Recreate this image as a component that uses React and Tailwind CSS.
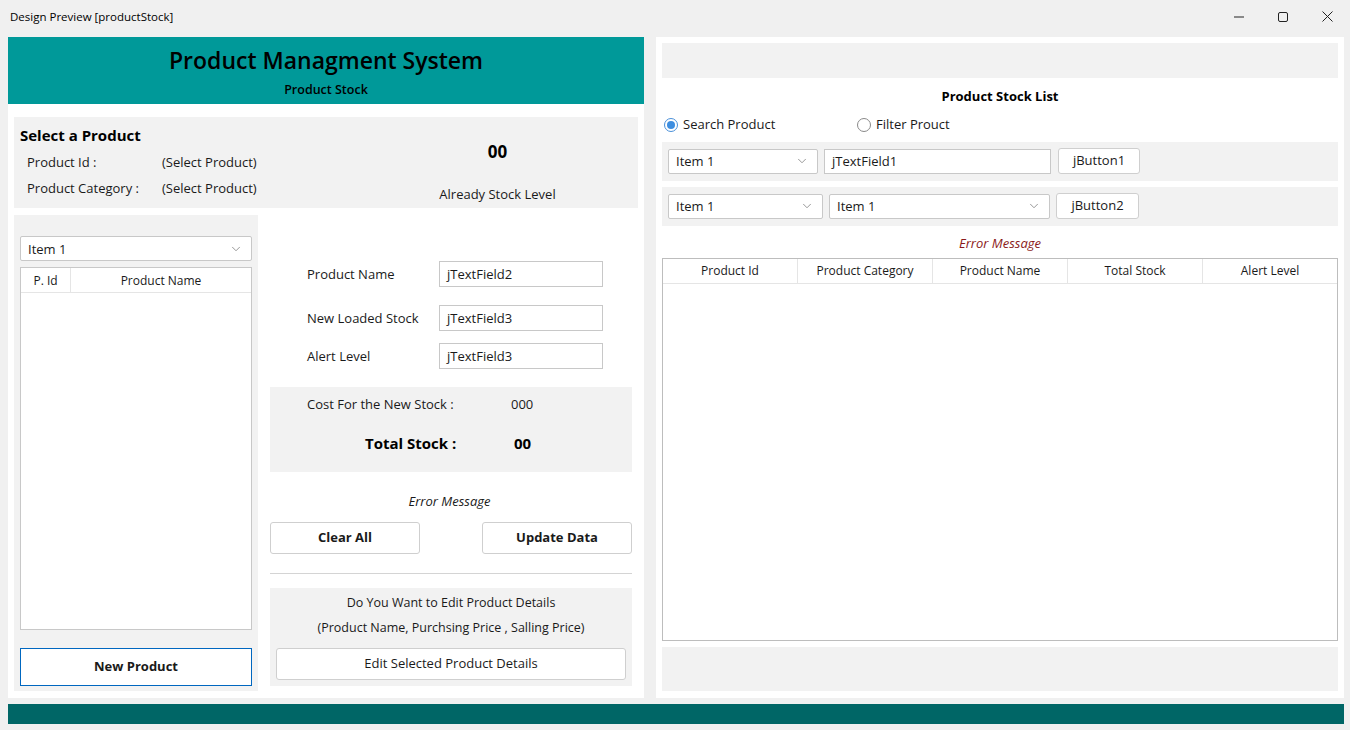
import React from 'react';
import { ChevronDown } from 'lucide-react';

const FONT = { fontFamily: '"Open Sans", "Noto Sans", sans-serif' };

function Combo({ label = 'Item 1', className = '' }) {
  return (
    <div className={`flex items-center justify-between bg-white border border-[#c8c8c8] rounded-[2px] pl-[7px] pr-[8px] text-[13px] text-[#1a1a1a] ${className}`}>
      <span className="pt-[2px]">{label}</span>
      <ChevronDown size={14} strokeWidth={1.3} className="text-[#777]" />
    </div>
  );
}

function Field({ value, className = '' }) {
  return (
    <div className={`flex items-center bg-white border border-[#c8c8c8] px-[7px] pt-[2px] text-[13px] text-[#1a1a1a] ${className}`}>
      {value}
    </div>
  );
}

function Btn({ children, className = '' }) {
  return (
    <div className={`flex items-center justify-center bg-white border border-[#cfcfcf] rounded-[3px] text-[13px] text-[#1a1a1a] ${className}`}>
      {children}
    </div>
  );
}

function TitleBar() {
  return (
    <div className="h-[33px] flex items-center justify-between pl-[10px] shrink-0">
      <span className="text-[11.5px] text-black">Design Preview [productStock]</span>
      <div className="flex items-center h-full pr-[1px]">
        <div className="w-[44px] h-full flex items-center justify-center">
          <svg width="10" height="10" viewBox="0 0 10 10"><line x1="0" y1="5" x2="10" y2="5" stroke="#222" strokeWidth="1" /></svg>
        </div>
        <div className="w-[44px] h-full flex items-center justify-center">
          <svg width="10" height="10" viewBox="0 0 10 10"><rect x="0.5" y="0.5" width="9" height="9" rx="1.5" fill="none" stroke="#222" strokeWidth="1" /></svg>
        </div>
        <div className="w-[44px] h-full flex items-center justify-center">
          <svg width="11" height="11" viewBox="0 0 11 11"><path d="M0.5 0.5 L10.5 10.5 M10.5 0.5 L0.5 10.5" stroke="#222" strokeWidth="1" /></svg>
        </div>
      </div>
    </div>
  );
}

function SelectProduct() {
  return (
    <div className="mx-[6px] mt-[13px] h-[91px] bg-[#f2f2f2] flex">
      <div className="w-[380px] pl-[6px] pt-[8px]">
        <div className="text-[15px] font-bold text-black leading-[20px]">Select a Product</div>
        <div className="flex text-[13px] text-[#1a1a1a] pl-[7px] mt-[8px] leading-[18px]">
          <span className="w-[135px]">Product Id :</span>
          <span>(Select Product)</span>
        </div>
        <div className="flex text-[13px] text-[#1a1a1a] pl-[7px] mt-[8px] leading-[18px]">
          <span className="w-[135px]">Product Category :</span>
          <span>(Select Product)</span>
        </div>
      </div>
      <div className="flex-1 flex flex-col items-center pt-[23px] pr-[37px]">
        <div className="text-[17px] font-bold text-black leading-[24px]">00</div>
        <div className="text-[13px] text-[#1a1a1a] mt-[21px] leading-[18px]">Already Stock Level</div>
      </div>
    </div>
  );
}

function ProductList() {
  return (
    <div className="w-[244px] h-[476px] shrink-0 bg-[#f2f2f2] px-[6px] pt-[21px] flex flex-col">
      <Combo className="h-[25px]" />
      <div className="mt-[6px] h-[363px] bg-white border border-[#c8c8c8] flex flex-col">
        <div className="flex h-[25px] border-b border-[#e5e5e5] text-[12px] text-[#1a1a1a]">
          <div className="w-[50px] flex items-center justify-center border-r border-[#e5e5e5] pt-[1px]">P. Id</div>
          <div className="flex-1 flex items-center justify-center pt-[1px]">Product Name</div>
        </div>
      </div>
      <div className="mt-[18px] h-[38px] bg-white border border-[#0067c0] flex items-center justify-center text-[13px] font-bold text-[#1a1a1a]">
        New Product
      </div>
    </div>
  );
}

function FormRow({ label, value, className = '' }) {
  return (
    <div className={`flex items-center ${className}`}>
      <span className="w-[132px] pl-[37px] box-content text-[13px] text-[#1a1a1a] pt-[2px]">{label}</span>
      <Field value={value} className="w-[164px] h-[26px]" />
    </div>
  );
}

function StockForm() {
  return (
    <div className="w-[362px] shrink-0 flex flex-col">
      <FormRow label="Product Name" value="jTextField2" className="mt-[46px]" />
      <FormRow label="New Loaded Stock" value="jTextField3" className="mt-[18px]" />
      <FormRow label="Alert Level" value="jTextField3" className="mt-[12px]" />
      <div className="mt-[18px] h-[85px] bg-[#f2f2f2] flex flex-col">
        <div className="flex text-[13px] text-[#1a1a1a] mt-[8px] leading-[18px]">
          <span className="pl-[37px] w-[241px]">Cost For the New Stock :</span>
          <span>000</span>
        </div>
        <div className="flex text-[15px] font-bold text-black mt-[20px] leading-[20px]">
          <span className="pl-[95px] w-[244px]">Total Stock :</span>
          <span>00</span>
        </div>
      </div>
      <div className="mt-[20px] text-center text-[13px] italic text-[#1a1a1a] leading-[18px] pr-[3px]">Error Message</div>
      <div className="mt-[12px] flex justify-between">
        <Btn className="w-[150px] h-[32px] font-bold">Clear All</Btn>
        <Btn className="w-[150px] h-[32px] font-bold">Update Data</Btn>
      </div>
      <div className="mt-[19px] h-px bg-[#d4d4d4]" />
      <div className="mt-[14px] h-[98px] bg-[#f2f2f2] flex flex-col items-center px-[6px]">
        <div className="text-[12.5px] text-[#1a1a1a] mt-[6px] leading-[18px]">Do You Want to Edit Product Details</div>
        <div className="text-[12.5px] text-[#1a1a1a] mt-[7px] leading-[18px]">(Product Name, Purchsing Price , Salling Price)</div>
        <Btn className="mt-[11px] w-full h-[32px]">Edit Selected Product Details</Btn>
      </div>
    </div>
  );
}

function LeftPanel() {
  return (
    <div className="w-[636px] h-[661px] shrink-0 bg-white flex flex-col">
      <div className="h-[67px] bg-[#009999] flex flex-col items-center">
        <div className="mt-[8px] text-[23px] font-semibold text-black leading-[30px]">Product Managment System</div>
        <div className="mt-[7px] text-[12.5px] font-semibold text-black leading-[16px]">Product Stock</div>
      </div>
      <SelectProduct />
      <div className="flex mt-[7px] pl-[6px] gap-[12px]">
        <ProductList />
        <StockForm />
      </div>
    </div>
  );
}

function Radio({ checked, label, className = '' }) {
  return (
    <div className={`flex items-center gap-[5px] text-[13px] text-[#1a1a1a] ${className}`}>
      {checked ? (
        <span className="w-[14px] h-[14px] rounded-full border border-[#4a90d9] bg-white flex items-center justify-center">
          <span className="w-[8px] h-[8px] rounded-full bg-[#3d8ee0]" />
        </span>
      ) : (
        <span className="w-[14px] h-[14px] rounded-full border border-[#8a8a8a] bg-white" />
      )}
      <span>{label}</span>
    </div>
  );
}

function RightPanel() {
  const cols = ['Product Id', 'Product Category', 'Product Name', 'Total Stock', 'Alert Level'];
  return (
    <div className="w-[688px] h-[661px] shrink-0 bg-white px-[6px] pt-[6px] flex flex-col">
      <div className="h-[35px] bg-[#f2f2f2]" />
      <div className="mt-[9px] text-center text-[13px] font-bold text-black leading-[18px]">Product Stock List</div>
      <div className="flex mt-[10px] pl-[2px]">
        <Radio checked label="Search Product" className="w-[193px]" />
        <Radio label="Filter Prouct" />
      </div>
      <div className="mt-[7px] h-[39px] bg-[#f2f2f2] flex items-center px-[6px]">
        <Combo className="w-[150px] h-[25px]" />
        <Field value="jTextField1" className="ml-[6px] w-[227px] h-[25px]" />
        <Btn className="ml-[7px] w-[82px] h-[26px]">jButton1</Btn>
      </div>
      <div className="mt-[6px] h-[39px] bg-[#f2f2f2] flex items-center px-[6px]">
        <Combo className="w-[155px] h-[25px]" />
        <Combo className="ml-[6px] w-[221px] h-[25px]" />
        <Btn className="ml-[6px] w-[83px] h-[26px]">jButton2</Btn>
      </div>
      <div className="mt-[8px] text-center text-[13px] italic text-[#8b1a1a] leading-[18px]">Error Message</div>
      <div className="mt-[6px] h-[383px] border border-[#bdbdbd] flex flex-col">
        <div className="flex h-[25px] border-b border-[#e5e5e5]">
          {cols.map((c, i) => (
            <div key={c} className={`flex-1 flex items-center justify-center pt-[1px] text-[12px] text-[#1a1a1a] ${i < cols.length - 1 ? 'border-r border-[#e5e5e5]' : ''}`}>
              {c}
            </div>
          ))}
        </div>
      </div>
      <div className="mt-[6px] h-[44px] bg-[#f2f2f2]" />
    </div>
  );
}

export default function App() {
  return (
    <div style={FONT} className="w-[1350px] h-[730px] bg-[#f0f0f0] flex flex-col overflow-hidden">
      <TitleBar />
      <div className="flex pl-[8px] mt-[4px] gap-[12px]">
        <LeftPanel />
        <RightPanel />
      </div>
      <div className="ml-[8px] w-[1336px] mt-[6px] h-[20px] bg-[#006666]" />
    </div>
  );
}
